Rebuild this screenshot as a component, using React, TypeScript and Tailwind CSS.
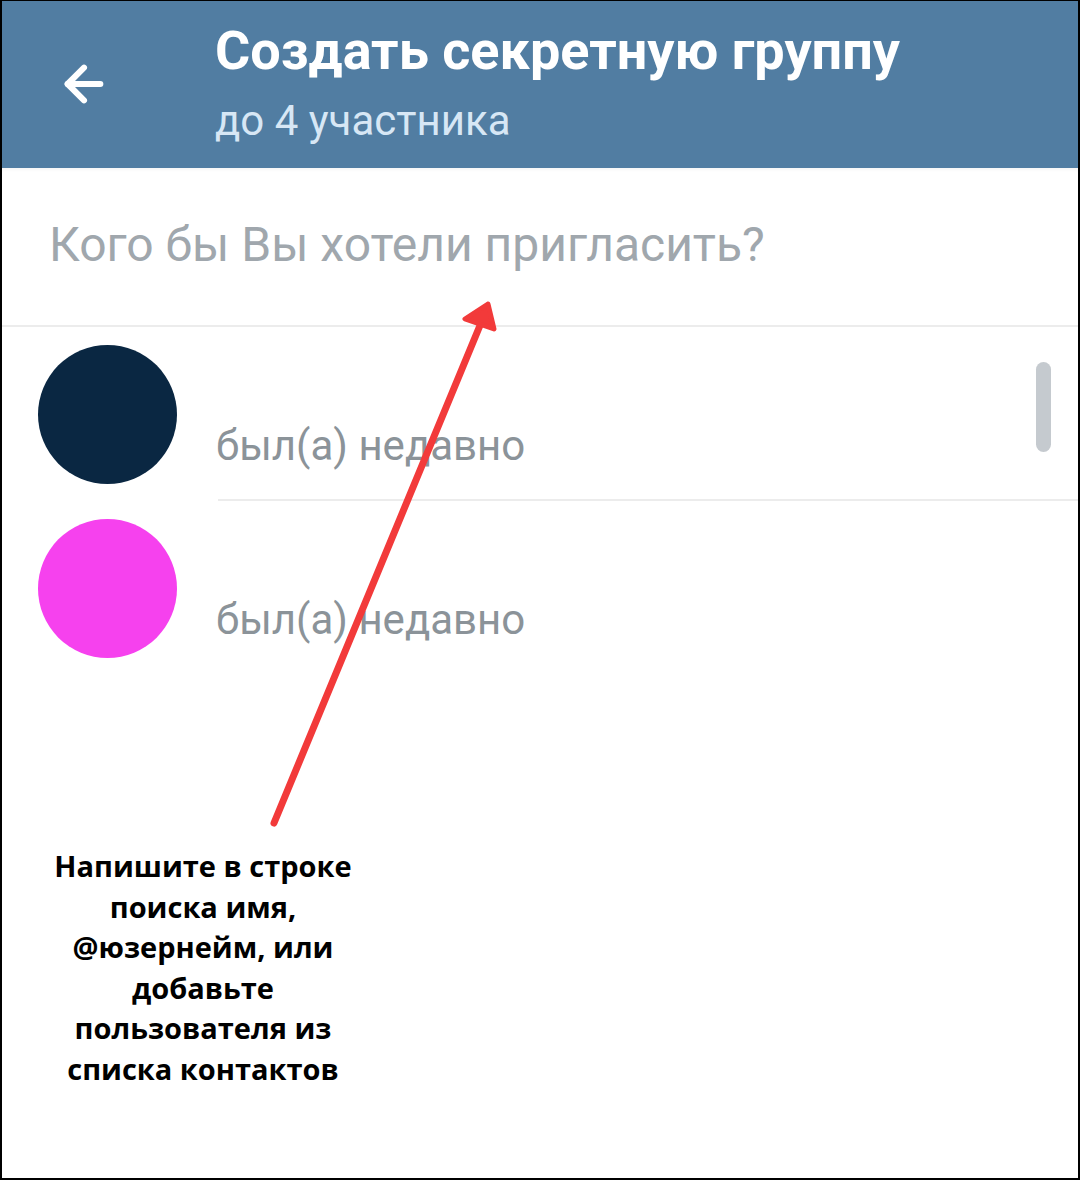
import { ArrowLeft } from "lucide-react";

interface Contact {
    id: number;
    color: string;
    status: string;
}

const contacts: Contact[] = [
    { id: 1, color: "bg-[#0a2742]", status: "был(а) недавно" },
    { id: 2, color: "bg-[#f641ee]", status: "был(а) недавно" },
];

function RedArrow() {
    // annotation drawn over the screenshot
    return (
        <svg
            className="absolute left-0 top-0 pointer-events-none"
            width="1080"
            height="1180"
            viewBox="0 0 1080 1180"
        >
            <line
                x1="272"
                y1="822"
                x2="479"
                y2="322"
                stroke="#f23a3a"
                strokeWidth="7"
                strokeLinecap="round"
            />
            <polygon
                points="486,303 463,318 492,328"
                fill="#f23a3a"
                stroke="#f23a3a"
                strokeWidth="5"
                strokeLinejoin="round"
            />
        </svg>
    );
}

export default function App() {
    return (
        <div
            className="relative w-[1080px] h-[1180px] overflow-hidden bg-white border-x-2 border-b-2 border-t border-black"
            style={{ fontFamily: "Roboto, 'Noto Sans', sans-serif" }}
        >
            {/* header */}
            <div className="h-[167px] bg-[#517da2] flex items-start">
                <div className="w-[213px] h-full flex items-center pl-[54px] pb-[2px]">
                    <ArrowLeft size={56} strokeWidth={2.6} className="text-white" />
                </div>
                <div className="flex flex-col pt-[17px]">
                    <div className="text-white text-[54px] font-bold leading-[66px]">
                        Создать секретную группу
                    </div>
                    <div className="text-[#d7e7f5] text-[42px] leading-[50px] mt-[12px]">
                        до 4 участника
                    </div>
                </div>
            </div>

            {/* search */}
            <div className="h-[159px] flex items-center pl-[47px] pb-[4px] border-b-2 border-[#ececec] shadow-[inset_0_4px_4px_-3px_rgba(0,0,0,0.06)]">
                <input
                    placeholder="Кого бы Вы хотели пригласить?"
                    className="w-full outline-none text-[48px] placeholder:text-[#a0a7ad] bg-transparent"
                />
            </div>

            {/* contacts */}
            <div className="flex flex-col">
                {contacts.map((c, i) => (
                    <div key={c.id} className="h-[174px] flex items-center">
                        <div className="w-[216px] pl-[36px]">
                            <div className={`w-[139px] h-[139px] rounded-full ${c.color}`} />
                        </div>
                        <div
                            className={
                                i === 0
                                    ? "flex-1 h-full flex flex-col justify-end pb-[28px] border-b-2 border-[#ececec]"
                                    : "flex-1 h-full flex flex-col justify-end pb-[30px]"
                            }
                        >
                            <div className="text-[42px] leading-[50px] text-[#8b9399] -ml-[2px]">
                                {c.status}
                            </div>
                        </div>
                    </div>
                ))}
            </div>

            {/* scrollbar */}
            <div className="absolute left-[1034px] top-[361px] w-[15px] h-[90px] rounded-full bg-[#c5cacf]" />

            {/* annotation */}
            <div
                className="mt-[171px] ml-[21px] w-[360px] text-center text-black font-bold text-[29px] leading-[40.5px]"
                style={{ fontFamily: "'Open Sans', sans-serif" }}
            >
                Напишите в строке
                <br />
                поиска имя,
                <br />
                @юзернейм, или
                <br />
                добавьте
                <br />
                пользователя из
                <br />
                списка контактов
            </div>

            <RedArrow />
        </div>
    );
}
